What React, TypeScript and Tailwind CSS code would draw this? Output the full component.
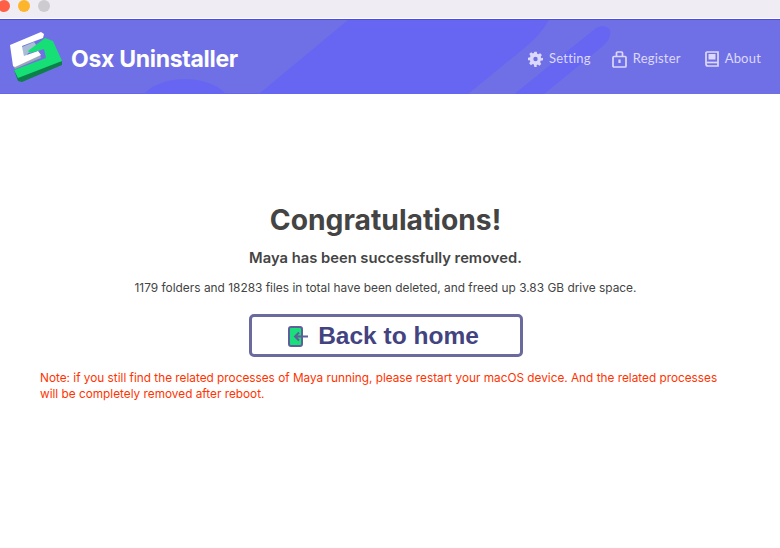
import React from "react";

function Logo() {
  return (
    <svg width="70" height="70" viewBox="0 0 70 70" className="shrink-0 -mt-[4px]">
      <path d="M22 27 L34 22 L40 30 L28 33 L26 37 L24 37 Z" fill="#a9bdd4" />
      <path d="M13 46 L40 35 L41 38 L15 49 Z" fill="#9aa8b8" />
      <path d="M10 25 L41 12 L44 14 L43 18 L22 26 L24 36 L38 31 L41 35 L15 47 L13 46 Z" fill="#ffffff" />
      <path d="M14 50 L62 41 L62 45 L22 62 L18 61 Z" fill="#0d7f4b" />
      <path d="M28 31 L45 18 L53 21 L62 41 L18 58 L14 50 L46 38 L44 29 L30 33 Z" fill="#16df75" />
    </svg>
  );
}

function Gear() {
  return (
    <svg width="15" height="16" viewBox="0 0 24 24" preserveAspectRatio="none" fill="#dcd8fb">
      <path fillRule="evenodd" d="M10 1h4l.7 3.2 1.9.8 2.8-1.8 2.8 2.8-1.8 2.8.8 1.9L24 10v4l-3.8.7-.8 1.9 1.8 2.8-2.8 2.8-2.8-1.8-1.9.8L13.9 24h-3.8l-.7-3.8-1.9-.8-2.8 1.8-2.8-2.8 1.8-2.8-.8-1.9L0 14v-4l3.2-.7.8-1.9-1.8-2.8 2.8-2.8 2.8 1.8 1.9-.8z M12 8.5a3.5 3.5 0 1 0 0 7 3.5 3.5 0 0 0 0-7z" />
    </svg>
  );
}

function Lock() {
  return (
    <svg width="15" height="17" viewBox="0 0 15 17" fill="none" stroke="#dcd8fb" strokeWidth="1.7">
      <rect x="1" y="5.5" width="13" height="10.5" rx="1" />
      <path d="M4.5 5.5V2a1 1 0 0 1 1-1h4a1 1 0 0 1 1 1v3.5" />
      <path d="M7.5 8.5v3.5" strokeWidth="2.2" />
    </svg>
  );
}

function Book() {
  return (
    <svg width="14" height="16" viewBox="0 0 14 16" fill="none" stroke="#dcd8fb" strokeWidth="1.7">
      <path d="M1 13V2a1 1 0 0 1 1-1h11v14H3a2 2 0 0 1-2-2z" />
      <path d="M1.5 11.5H13" />
      <rect x="3.5" y="3" width="7" height="5.5" fill="#dcd8fb" stroke="none" />
    </svg>
  );
}

function BackIcon() {
  return (
    <svg width="20" height="21" viewBox="0 0 20 21" className="shrink-0">
      <rect x="1" y="1" width="13" height="19" rx="2" fill="#19e07a" stroke="#5f5f9c" strokeWidth="2" />
      <path d="M20 10.5H7M11 6.5 7 10.5l4 4" fill="none" stroke="#5f5f9c" strokeWidth="2" />
    </svg>
  );
}

function NavItem({ icon, label, className }: { icon: React.ReactNode; label: string; className?: string }) {
  return (
    <div className={"flex items-center gap-[6px] " + (className ?? "")}>
      {icon}
      <span className="text-[13px] tracking-[0.2px] text-[#dcd8fb] font-['Lato',sans-serif]">{label}</span>
    </div>
  );
}

export default function App() {
  return (
    <div className="w-[780px] h-[548px] overflow-hidden bg-white flex flex-col font-['Inter','Liberation_Sans',sans-serif]">
      <div className="h-[19px] bg-[#efecf3] flex items-center gap-[8px] pl-0 shrink-0 border-b border-b-white">
        <span className="w-[12px] h-[12px] rounded-full bg-[#fe5f45] ml-[-2px] mt-[-6px] shrink-0" />
        <span className="w-[12px] h-[12px] rounded-full bg-[#fdb52c] mt-[-6px] shrink-0" />
        <span className="w-[12px] h-[12px] rounded-full bg-[#cdcbd0] mt-[-6px] shrink-0" />
      </div>
      <div className="relative h-[75px] shrink-0 overflow-hidden bg-[#6666f3] border-t border-t-[#4a4ae0] flex items-center justify-between">
        <svg className="absolute inset-0" width="780" height="75" viewBox="0 0 780 75">
          <path d="M0 0H348L260 73H0Z" fill="#7070e6" />
          <path d="M467 75 L522 30 Q540 16 549 0 H780 V75Z" fill="#7070e6" />
          <path d="M513 75 L596 8 Q605 3 610 10 Q612 18 603 26 L543 75 Z" fill="#6666f3" />
          <ellipse cx="185" cy="85" rx="45" ry="26" fill="#6666f3" />
        </svg>
        <div className="relative flex items-center gap-[1px]">
          <Logo />
          <span className="text-[23px] font-bold tracking-[-0.3px] text-white mt-[4px]">Osx Uninstaller</span>
        </div>
        <div className="relative flex items-center gap-[21px] pr-[19px] mt-[4px]">
          <NavItem icon={<Gear />} label="Setting" />
          <NavItem icon={<Lock />} label="Register" />
          <NavItem icon={<Book />} label="About" className="ml-[3px]" />
        </div>
      </div>
      <div className="w-[771px] flex flex-col items-center pt-[109px]">
        <h1 className="text-[28.25px] leading-[34px] font-bold text-[#444444]">Congratulations!</h1>
        <p className="mt-[11px] text-[14.75px] leading-[20px] font-semibold text-[#444444]">Maya has been successfully removed.</p>
        <p className="mt-[11px] text-[11.9px] leading-[18px] text-[#444444]">1179 folders and 18283 files in total have been deleted, and freed up 3.83 GB drive space.</p>
        <div className="mt-[17px] w-[274px] h-[43px] rounded-[5px] border-[3px] border-[#6a6a9c] flex items-center justify-center gap-[10px] pr-[4px] pt-[1px]">
          <BackIcon />
          <span className="text-[24.5px] font-bold text-[#43437f] font-['Liberation_Sans',sans-serif]">Back to home</span>
        </div>
        <p className="mt-[13px] ml-[-1px] w-[690px] text-[11.8px] leading-[16px] text-[#ff3300]">
          Note: if you still find the related processes of Maya running, please restart your macOS device. And the related processes will be completely removed after reboot.
        </p>
      </div>
    </div>
  );
}
